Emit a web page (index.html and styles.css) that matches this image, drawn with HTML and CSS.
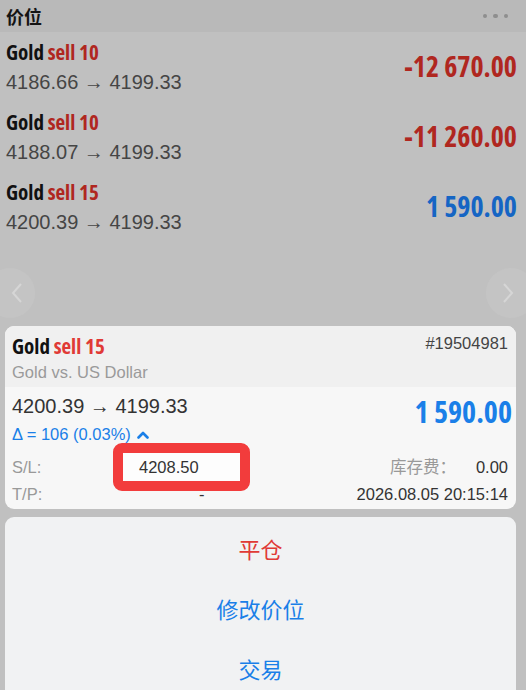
FILE: index.html
```html
<!DOCTYPE html>
<html lang="zh-CN">
<head>
<meta charset="utf-8">
<title>价位</title>
<link rel="stylesheet" href="styles.css">
</head>
<body>
<div class="screen">
  <header class="topbar">
    <span class="topbar-title">价位</span>
    <span class="dots"><i></i><i></i><i></i></span>
  </header>

  <div class="list">
    <div class="row">
      <div class="info">
        <div class="name"><span class="sym">Gold</span> <span class="side">sell 10</span></div>
        <div class="prices">4186.66 → 4199.33</div>
      </div>
      <div class="pl neg">-12 670.00</div>
    </div>
    <div class="row">
      <div class="info">
        <div class="name"><span class="sym">Gold</span> <span class="side">sell 10</span></div>
        <div class="prices">4188.07 → 4199.33</div>
      </div>
      <div class="pl neg">-11 260.00</div>
    </div>
    <div class="row">
      <div class="info">
        <div class="name"><span class="sym">Gold</span> <span class="side">sell 15</span></div>
        <div class="prices">4200.39 → 4199.33</div>
      </div>
      <div class="pl pos">1 590.00</div>
    </div>
  </div>

  <div class="pager">
    <span class="pager-btn prev">
      <svg width="14" height="22" viewBox="0 0 14 22"><path d="M11 2 L3 11 L11 20" fill="none" stroke="#d6d6d6" stroke-width="2"/></svg>
    </span>
    <span class="pager-btn next">
      <svg width="14" height="22" viewBox="0 0 14 22"><path d="M3 2 L11 11 L3 20" fill="none" stroke="#d6d6d6" stroke-width="2"/></svg>
    </span>
  </div>

  <section class="card ticket">
    <div class="ticket-head">
      <div class="ticket-top">
        <div class="name"><span class="sym">Gold</span> <span class="side">sell 15</span></div>
        <div class="order-id">#19504981</div>
      </div>
      <div class="desc">Gold vs. US Dollar</div>
    </div>
    <div class="ticket-body">
      <div class="ticket-main">
        <div class="ticket-left">
          <div class="prices dark">4200.39 → 4199.33</div>
          <div class="delta">Δ = 106 (0.03%)
            <svg class="caret" width="12" height="8" viewBox="0 0 12 8"><path d="M1.5 6.5 L6 2 L10.5 6.5" fill="none" stroke="#1a7fe8" stroke-width="2.6" stroke-linecap="round" stroke-linejoin="round"/></svg>
          </div>
        </div>
        <div class="ticket-pl">1 590.00</div>
      </div>
      <div class="field-row">
        <span class="label">S/L:</span>
        <span class="value sl"><span class="value-text">4208.50</span></span>
        <span class="right"><span class="label">库存费：</span><span class="num">0.00</span></span>
      </div>
      <div class="field-row">
        <span class="label">T/P:</span>
        <span class="value tp">-</span>
        <span class="right"><span class="num">2026.08.05 20:15:14</span></span>
      </div>
    </div>
  </section>

  <section class="card actions">
    <div class="action close">平仓</div>
    <div class="action">修改价位</div>
    <div class="action">交易</div>
  </section>
</div>
</body>
</html>
```
FILE: styles.css
```css
*, *::before, *::after { box-sizing: border-box; }
html, body { margin: 0; padding: 0; }
body {
  background: #c0c0c0;
  width: 526px;
  height: 690px;
  overflow: hidden;
  font-family: "Liberation Sans", Arial, "Noto Sans CJK SC", sans-serif;
}
.screen { display: flex; flex-direction: column; }

.topbar {
  height: 32px;
  background: #b9b9b9;
  display: flex;
  align-items: center;
  justify-content: space-between;
  padding: 0 18px 0 6px;
}
.topbar-title {
  font-family: "Noto Sans CJK SC", sans-serif;
  font-weight: 700;
  font-size: 18px;
  color: #141414;
  line-height: 32px;
}
.dots { display: flex; gap: 6px; }
.dots i {
  width: 4.5px; height: 4.5px; border-radius: 50%;
  background: #8e8e8e; display: block;
}

.list { display: flex; flex-direction: column; }
.row {
  height: 70px;
  padding: 8px 9px 6px 6px;
  display: flex;
  justify-content: space-between;
  align-items: center;
}
.name {
  font-family: "Open Sans", sans-serif;
  font-stretch: 75%;
  font-weight: 700;
  font-size: 21px;
  line-height: 24px;
  white-space: nowrap;
}
.sym { color: #111; }
.side { color: #b0271f; }
.prices {
  font-size: 20px;
  line-height: 28px;
  margin-top: 4px;
  color: #454545;
  white-space: nowrap;
}
.pl {
  font-family: "Open Sans", sans-serif;
  font-stretch: 75%;
  font-weight: 700;
  font-size: 28px;
  line-height: 34px;
  margin-bottom: 4px;
}
.pl.neg { color: #b0271f; }
.pl.pos { color: #1565c4; }

.pager {
  height: 84px;
  padding-top: 26px;
  display: flex;
  justify-content: space-between;
  align-items: flex-start;
}
.pager-btn {
  width: 50px; height: 50px; border-radius: 50%;
  background: #c4c4c4;
  display: flex; align-items: center; justify-content: center;
}
.pager-btn.prev { margin-left: -15px; padding-left: 14px; }
.pager-btn.next { margin-right: -10px; padding-right: 6px; }

.card {
  margin: 0 10px 0 5px;
  border-radius: 9px;
  overflow: hidden;
}
.ticket { background: #f7f7f7; }
.ticket-head {
  background: #f0f0f0;
  height: 61px;
  padding: 8px 8px 0 7px;
}
.ticket-top { display: flex; justify-content: space-between; align-items: flex-start; }
.ticket .side { color: #e03a36; }
.order-id {
  font-size: 16.5px;
  line-height: 20px;
  color: #444;
  margin-top: -1px;
}
.desc {
  font-size: 16.5px;
  line-height: 22px;
  margin-top: 3px;
  color: #9a9a9a;
}
.ticket-body { padding: 6px 8px 1px 7px; height: 122px; }
.ticket-main { display: flex; justify-content: space-between; align-items: flex-start; }
.prices.dark { margin-top: 0; line-height: 26px; color: #333; }
.delta {
  font-size: 16.5px;
  line-height: 20px;
  margin-top: 5px;
  color: #1a7fe8;
  display: flex;
  align-items: center;
  gap: 6px;
}
.caret { margin-top: 1px; }
.ticket-pl {
  font-family: "Open Sans", sans-serif;
  font-stretch: 75%;
  font-weight: 700;
  font-size: 30px;
  line-height: 38px;
  color: #1a7fe8;
  margin-right: -4px;
}
.field-row {
  display: flex;
  align-items: center;
  height: 27px;
  font-size: 16.5px;
  line-height: 27px;
}
.ticket-main + .field-row { margin-top: 10px; }
.label { color: #999; }
.field-row > .label { width: 127px; }
.value { color: #333; position: relative; }
.value.tp { padding-left: 60px; }
.value.sl::before {
  content: "";
  position: absolute;
  left: -26px;
  top: -11px;
  width: 137px;
  height: 48px;
  border: 10px solid #f23c3c;
  border-radius: 9px;
  background: #fdfdfd;
}
.value-text { position: relative; }
.right { margin-left: auto; display: flex; gap: 20px; }
.num { color: #333; }

.actions {
  margin-top: 8px;
  background: #f1f2f3;
  padding-top: 1px;
  height: 200px;
  border-radius: 9px 9px 0 0;
}
.action {
  height: 60px;
  line-height: 60px;
  text-align: center;
  font-family: "Noto Sans CJK SC", sans-serif;
  font-size: 22px;
  color: #1a7fe8;
}
.action.close { color: #e03a36; }
```
